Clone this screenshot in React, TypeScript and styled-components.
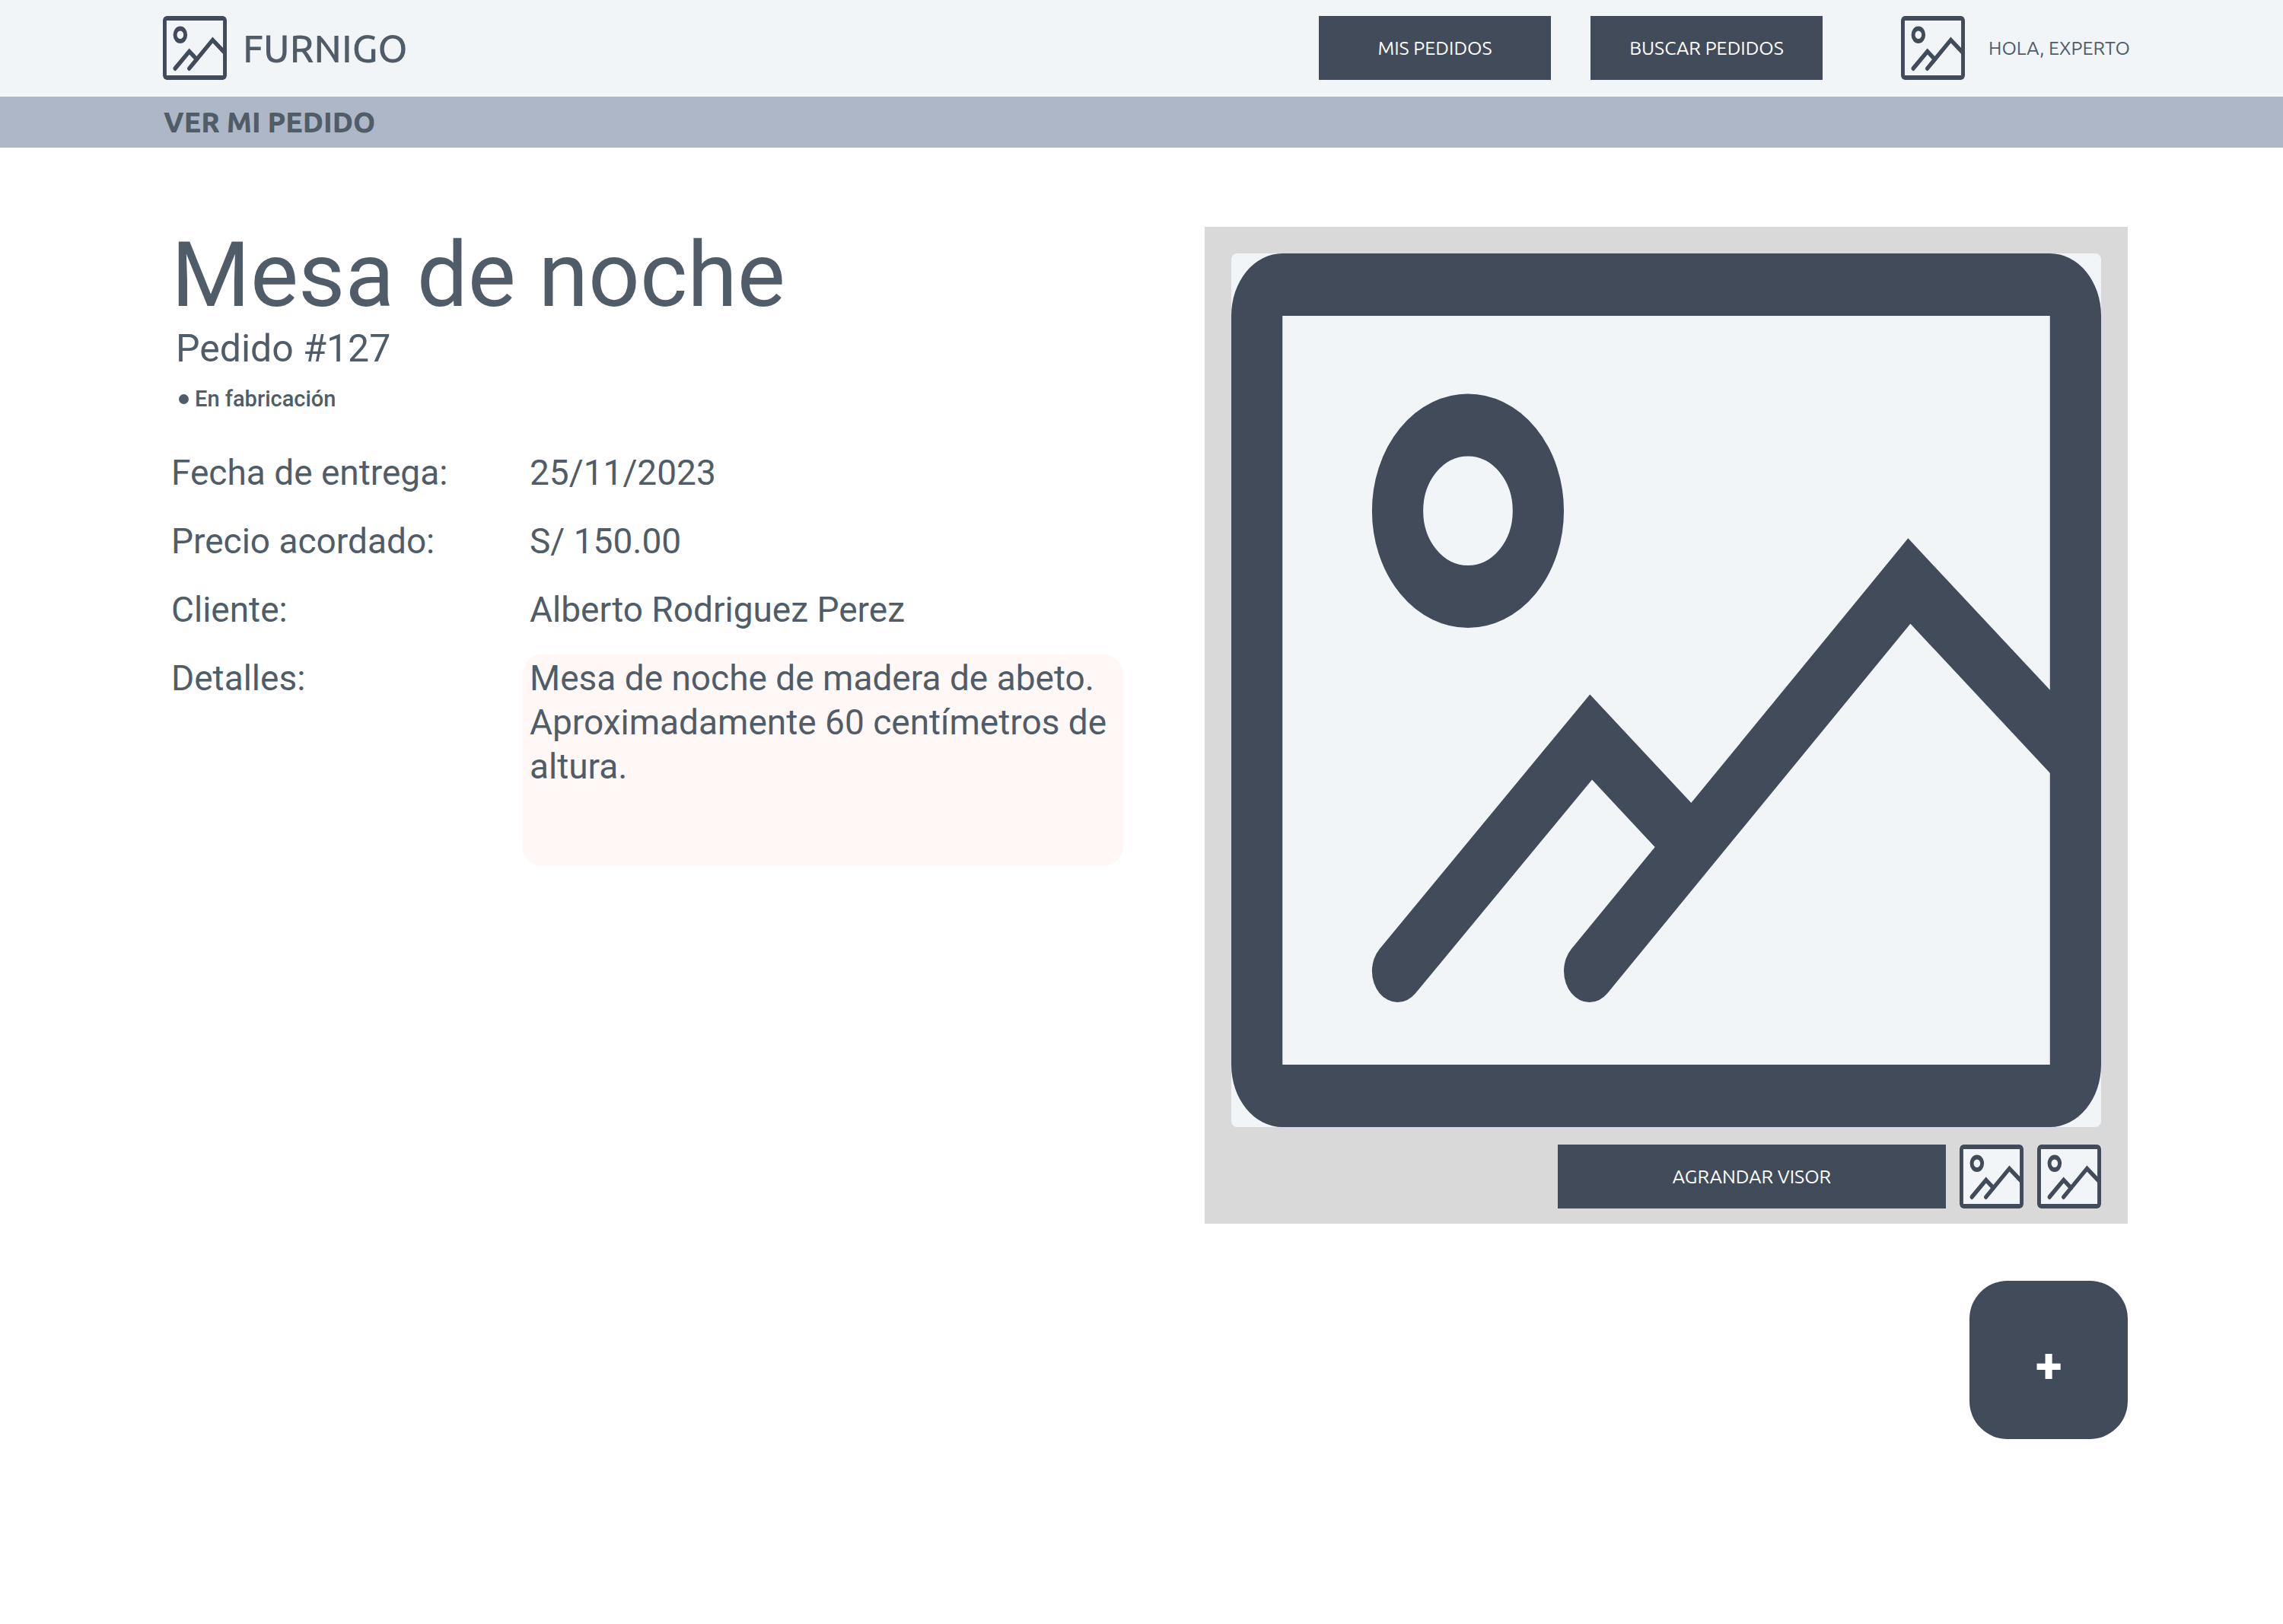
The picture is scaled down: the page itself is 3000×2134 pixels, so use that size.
import React from "react";
import styled, { createGlobalStyle } from "styled-components";

const color = {
  ink: "#424b5a",
  text: "#505d68",
  surface: "#f1f5f8",
  band: "#aeb7c8",
  viewer: "#d9d9d9",
  note: "#fff8f6",
};

const brandFont = `Ubuntu, "Open Sans", sans-serif`;

const GlobalStyle = createGlobalStyle`
  *, *::before, *::after { box-sizing: border-box; }
  body { margin: 0; background: #fff; color: ${color.text}; font-family: Roboto, sans-serif; }
  h1, p, dl, dd { margin: 0; }
  button { border: 0; cursor: pointer; }
`;

const Header = styled.header`
  display: flex;
  align-items: center;
  height: 127px;
  padding: 0 200px 2px 214px;
  background: ${color.surface};
  font-family: ${brandFont};
`;

const Brand = styled.a`
  display: flex;
  align-items: center;
  gap: 21px;
  margin-right: auto;
  color: inherit;
  font-size: 50px;
  font-weight: 500;
  line-height: 64px;
  text-decoration: none;
`;

const Nav = styled.nav`
  display: flex;
  gap: 52px;
`;

const Button = styled.button<{ $width: number }>`
  width: ${(p) => p.$width}px;
  height: 84px;
  padding: 0;
  background: ${color.ink};
  color: #fff;
  font-family: ${brandFont};
  font-size: 25px;
  line-height: 32px;
`;

const User = styled.div`
  display: flex;
  align-items: center;
  gap: 31px;
  min-width: 302px;
  margin-left: 103px;
  font-size: 25px;
  line-height: 32px;
  white-space: nowrap;
`;

const TitleBand = styled.div`
  display: flex;
  align-items: center;
  height: 67px;
  padding: 0 215px;
  background: ${color.band};
  font-family: ${brandFont};
  font-size: 37px;
  font-weight: 800;
  line-height: 48px;
`;

const Main = styled.main`
  display: grid;
  grid-template-columns: 1251fr 1213fr;
  gap: 107px;
  align-items: start;
  padding: 104px 204px 80px 225px;
`;

const Title = styled.h1`
  font-size: 119px;
  font-weight: 400;
  line-height: 128px;
`;

const OrderNumber = styled.p`
  padding-left: 6px;
  font-size: 50px;
  line-height: 64px;
`;

const Status = styled.p`
  display: flex;
  align-items: center;
  gap: 8px;
  margin-top: 18px;
  padding-left: 10px;
  font-size: 29px;
  font-weight: 500;
  line-height: 32px;

  &::before {
    content: "";
    width: 13px;
    height: 13px;
    border-radius: 50%;
    background: currentColor;
  }
`;

const Facts = styled.dl`
  display: grid;
  grid-template-columns: 461px 1fr;
  row-gap: 30px;
  margin-top: 50px;
  font-size: 46px;
  line-height: 58px;
`;

const Term = styled.dt`
  padding-top: 2px;
`;

const Value = styled.dd<{ $note?: boolean }>`
  padding: 2px 10px 0;
  border-radius: 26px;
  min-height: ${(p) => (p.$note ? "278px" : "0")};
  background: ${(p) => (p.$note ? color.note : "transparent")};
`;

const Side = styled.div`
  display: flex;
  flex-direction: column;
  align-items: flex-end;
  gap: 75px;
`;

const Viewer = styled.section`
  width: 100%;
  padding: 35px 35px 20px;
  background: ${color.viewer};
`;

const ViewerBar = styled.div`
  display: flex;
  justify-content: flex-end;
  gap: 18px;
  margin-top: 23px;
`;

const Thumb = styled.button`
  display: flex;
  padding: 0;
  background: none;
`;

const AddButton = styled.button`
  width: 208px;
  height: 208px;
  padding: 5px 0 0;
  border-radius: 50px;
  background: ${color.ink};
  color: #fff;
  font-family: ${brandFont};
  font-size: 66px;
  font-weight: 800;
  line-height: 80px;
`;

const Picture = styled.svg<{ $fill?: boolean }>`
  display: block;
  flex: none;
  width: ${(p) => (p.$fill ? "100%" : "84px")};
  height: ${(p) => (p.$fill ? "auto" : "84px")};
  aspect-ratio: ${(p) => (p.$fill ? "1143 / 1148" : "1")};
  border-radius: ${(p) => (p.$fill ? "8px" : "5px")};
  background: ${color.surface};
`;

function PictureIcon({ fill = false, label }: { fill?: boolean; label: string }) {
  return (
    <Picture $fill={fill} viewBox="0 0 17 14" preserveAspectRatio="none" role="img" aria-label={label}>
      <path
        fill={color.ink}
        fillRule="evenodd"
        d="M1 0H16A1 1 0 0 1 17 1V13A1 1 0 0 1 16 14H1A1 1 0 0 1 0 13V1A1 1 0 0 1 1 0ZM1 1V13H16V1Z"
      />
      <g fill="none" stroke={color.ink} strokeWidth="1" strokeLinecap="round">
        <circle cx="4.625" cy="4.125" r="1.375" />
        <path d="M3.25 11.5L7.03 7.75L9 9.48" />
        <path d="M7 11.5L13.25 5.25L16.5 8.1" />
      </g>
    </Picture>
  );
}

const facts = [
  { term: "Fecha de entrega:", value: "25/11/2023" },
  { term: "Precio acordado:", value: "S/ 150.00" },
  { term: "Cliente:", value: "Alberto Rodriguez Perez" },
  {
    term: "Detalles:",
    value: "Mesa de noche de madera de abeto. Aproximadamente 60 centímetros de altura.",
    note: true,
  },
];

export default function App() {
  return (
    <>
      <GlobalStyle />
      <Header>
        <Brand href="#">
          <PictureIcon label="Logo" />
          FURNIGO
        </Brand>
        <Nav>
          <Button type="button" $width={305}>MIS PEDIDOS</Button>
          <Button type="button" $width={305}>BUSCAR PEDIDOS</Button>
        </Nav>
        <User>
          <PictureIcon label="Perfil" />
          HOLA, EXPERTO
        </User>
      </Header>
      <TitleBand>VER MI PEDIDO</TitleBand>
      <Main>
        <div>
          <Title>Mesa de noche</Title>
          <OrderNumber>Pedido #127</OrderNumber>
          <Status>En fabricación</Status>
          <Facts>
            {facts.map((fact) => (
              <React.Fragment key={fact.term}>
                <Term>{fact.term}</Term>
                <Value $note={fact.note}>{fact.value}</Value>
              </React.Fragment>
            ))}
          </Facts>
        </div>
        <Side>
          <Viewer>
            <PictureIcon fill label="Mesa de noche" />
            <ViewerBar>
              <Button type="button" $width={510}>AGRANDAR VISOR</Button>
              <Thumb type="button"><PictureIcon label="Vista 1" /></Thumb>
              <Thumb type="button"><PictureIcon label="Vista 2" /></Thumb>
            </ViewerBar>
          </Viewer>
          <AddButton type="button">+</AddButton>
        </Side>
      </Main>
    </>
  );
}
